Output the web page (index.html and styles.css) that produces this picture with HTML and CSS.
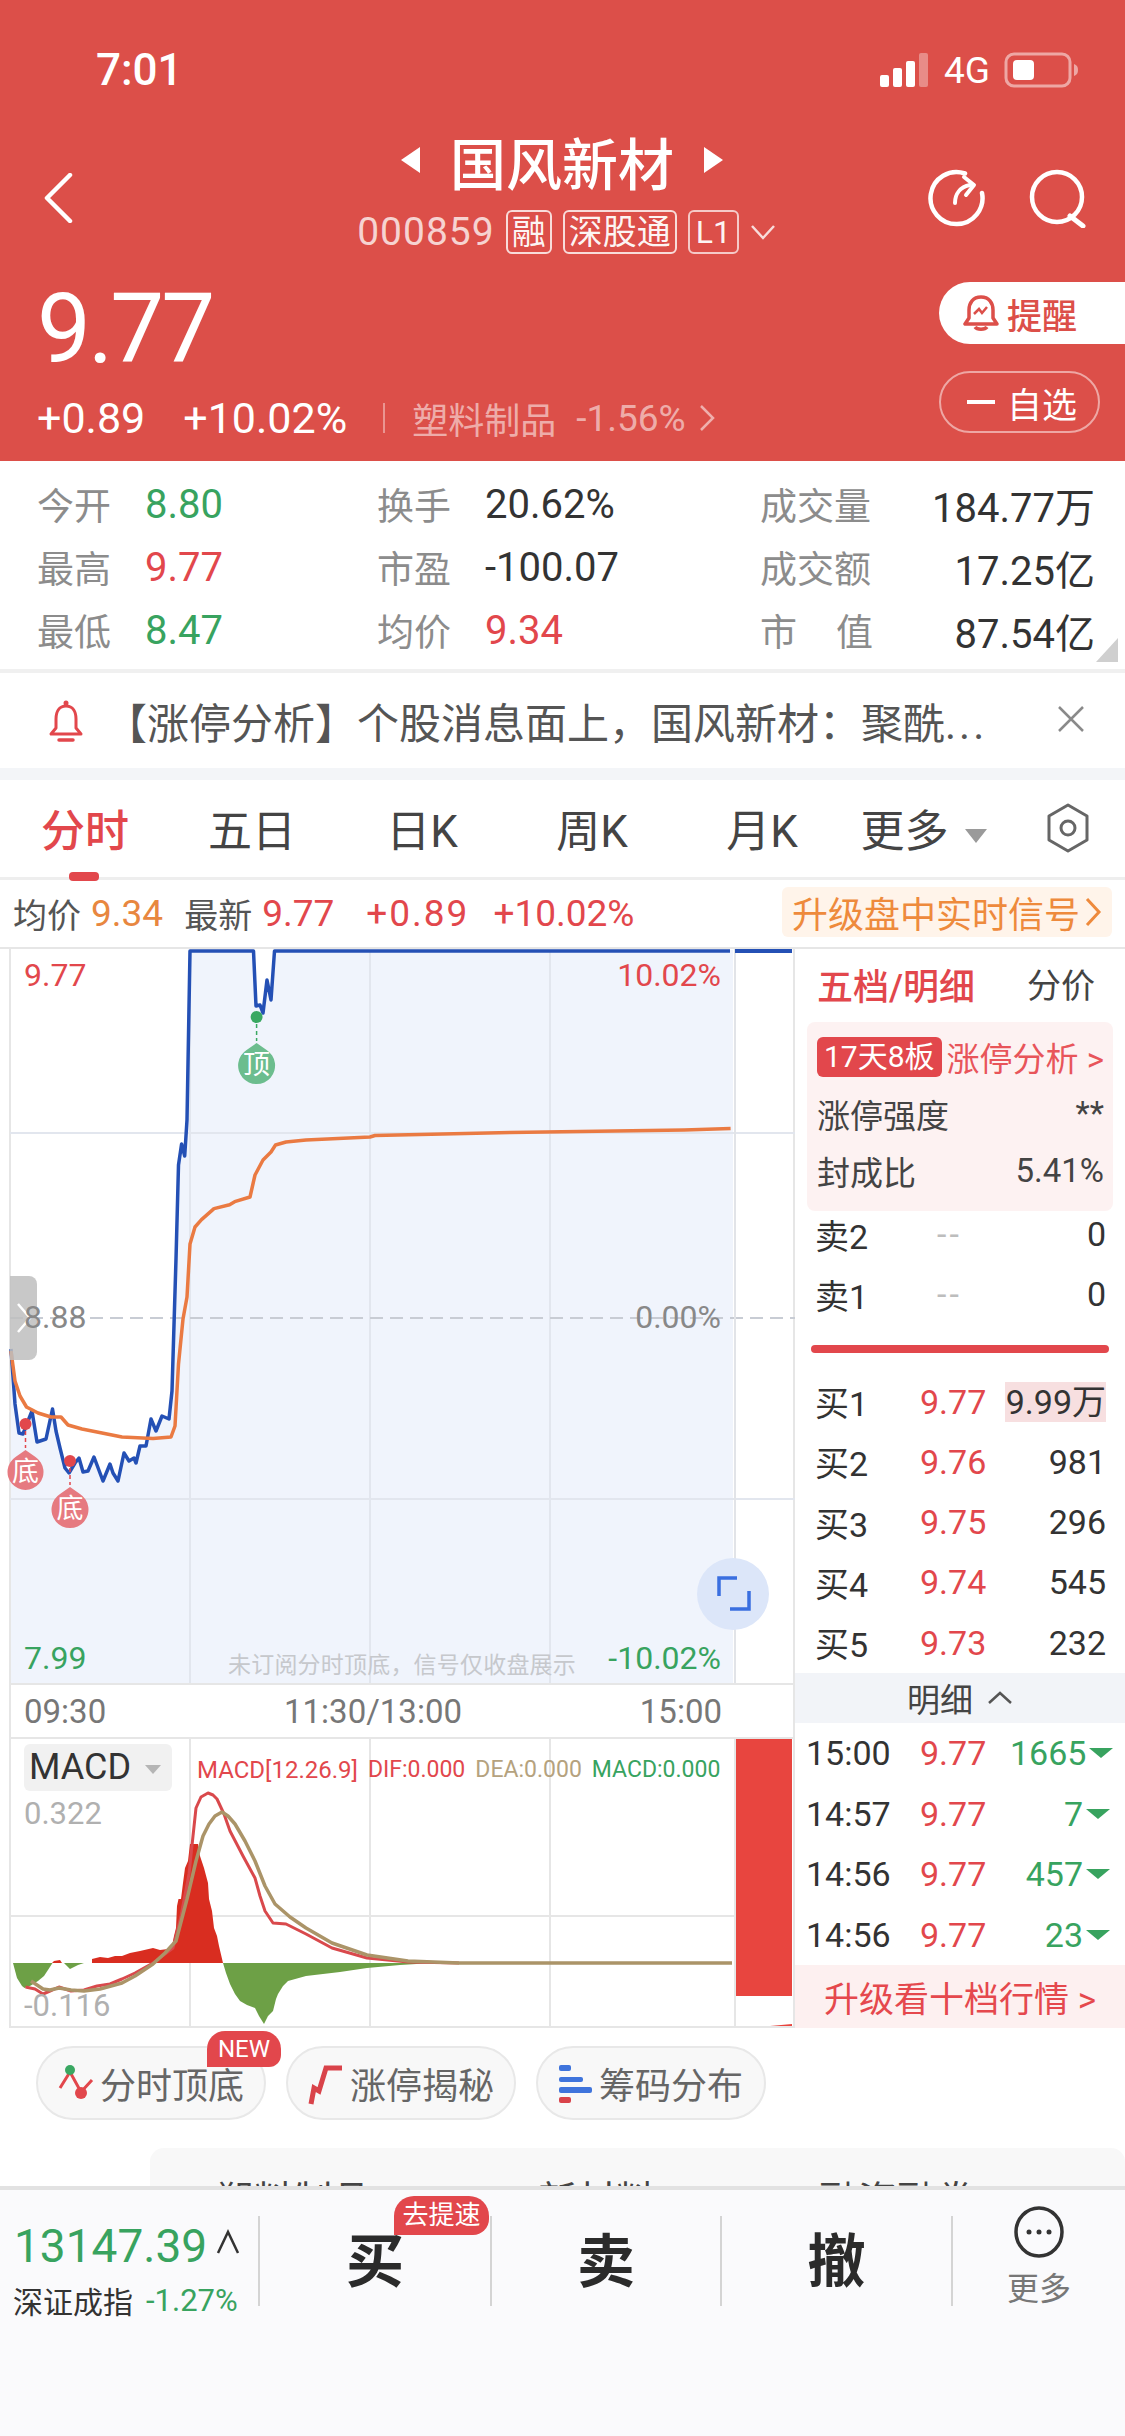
FILE: index.html
```html
<!DOCTYPE html>
<html lang="zh-CN">
<head>
  <meta charset="UTF-8" />
  <title>国风新材 000859</title>
  <link rel="stylesheet" href="styles.css">
</head>
<body>
<div class="page">

  <header class="header">
    <div class="status">
      <span class="clock">7:01</span>
      <div class="status-right">
        <svg width="50" height="36" viewBox="0 0 50 36"><rect x="0" y="23" width="9" height="12" rx="2" fill="#fff"/><rect x="13" y="16" width="9" height="19" rx="2" fill="#fff"/><rect x="26" y="9" width="9" height="26" rx="2" fill="#fff"/><rect x="39" y="1" width="9" height="34" rx="2" fill="#fff" opacity=".35"/></svg>
        <span class="net">4G</span>
        <svg width="76" height="36" viewBox="0 0 76 36"><rect x="2" y="2" width="64" height="32" rx="8" fill="none" stroke="#fff" stroke-opacity=".5" stroke-width="3"/><rect x="9" y="8" width="21" height="20" rx="4" fill="#fff"/><path d="M70 12c3 1 4 3 4 6s-1 5-4 6z" fill="#fff" opacity=".5"/></svg>
      </div>
    </div>

    <div class="nav">
      <svg class="back" width="34" height="50" viewBox="0 0 34 50"><path d="M28 2 5 25l23 23" fill="none" stroke="#fff" stroke-width="4.5" stroke-linecap="round" stroke-linejoin="round"/></svg>
      <div class="nav-center">
        <div class="title-row">
          <span class="tri-left"></span>
          <span class="title">国风新材</span>
          <span class="tri-right"></span>
        </div>
        <div class="code-row">
          <span class="code">000859</span>
          <span class="tag">融</span>
          <span class="tag">深股通</span>
          <span class="tag tag-l1">L1</span>
          <svg width="26" height="16" viewBox="0 0 26 16"><path d="M2 2l11 12L24 2" fill="none" stroke="#fff" stroke-opacity=".8" stroke-width="2.5"/></svg>
        </div>
      </div>
      <div class="nav-icons">
        <svg width="60" height="60" viewBox="0 0 60 60"><path d="M38 5.500A26 26 0 1 0 55 25" fill="none" stroke="#fff" stroke-width="4.500" stroke-linecap="round"/><path d="M28 35c0-9 5-16 15-18" fill="none" stroke="#fff" stroke-width="4" stroke-linecap="round"/><path d="M37 9l10 8-8 10" fill="none" stroke="#fff" stroke-width="4" stroke-linecap="round" stroke-linejoin="round"/></svg>
        <svg width="60" height="60" viewBox="0 0 60 60"><circle cx="29" cy="29" r="25" fill="none" stroke="#fff" stroke-width="4.500"/><path d="M42 48l13 10" fill="none" stroke="#fff" stroke-width="5" stroke-linecap="round"/></svg>
      </div>
    </div>

    <div class="quote">
      <div class="quote-left">
        <div class="price">9.77</div>
        <div class="change">
          <span class="change-a">+0.89</span>
          <span class="change-b">+10.02%</span>
          <span class="sep"></span>
          <span class="sector">塑料制品</span>
          <span class="sector-pct">-1.56%</span>
          <svg width="18" height="30" viewBox="0 0 18 30"><path d="M3 3l12 12L3 27" fill="none" stroke="#fff" stroke-opacity=".55" stroke-width="2.500"/></svg>
        </div>
      </div>
      <div class="quote-right">
        <div class="remind">
          <svg width="36" height="38" viewBox="0 0 36 38"><path d="M18 3c-8 0-12 6-12 13v8l-4 6h32l-4-6v-8c0-7-4-13-12-13z" fill="none" stroke="#dc4f49" stroke-width="3.500" stroke-linejoin="round"/><path d="M12 33c2 3 10 3 12 0" fill="none" stroke="#dc4f49" stroke-width="3.500"/><path d="M11 20l5-5 3 4 5-6" fill="none" stroke="#dc4f49" stroke-width="2.500"/></svg>
          <span>提醒</span>
        </div>
        <div class="watch"><i></i><span>自选</span></div>
      </div>
    </div>
  </header>

  <section class="stats">
    <div class="stat stat-a"><span class="lab">今开</span><span class="val green">8.80</span></div>
    <div class="stat stat-b"><span class="lab">换手</span><span class="val">20.62%</span></div>
    <div class="stat stat-c"><span class="lab">成交量</span><span class="val">184.77万</span></div>
    <div class="stat stat-a"><span class="lab">最高</span><span class="val red">9.77</span></div>
    <div class="stat stat-b"><span class="lab">市盈</span><span class="val">-100.07</span></div>
    <div class="stat stat-c"><span class="lab">成交额</span><span class="val">17.25亿</span></div>
    <div class="stat stat-a"><span class="lab">最低</span><span class="val green">8.47</span></div>
    <div class="stat stat-b"><span class="lab">均价</span><span class="val red">9.34</span></div>
    <div class="stat stat-c"><span class="lab lab-wide">市值</span><span class="val">87.54亿</span></div>
    <span class="corner"></span>
  </section>

  <section class="notice">
    <svg width="38" height="44" viewBox="0 0 38 44"><path d="M19 7c-7 0-10 6-10 13v9l-5 6h30l-5-6v-9c0-7-3-13-10-13z" fill="none" stroke="#e2474c" stroke-width="3" stroke-linejoin="round"/><circle cx="19" cy="4" r="2.500" fill="#e2474c"/><path d="M12 41h14" stroke="#e2474c" stroke-width="3.500" stroke-linecap="round"/></svg>
    <span class="notice-text">【涨停分析】个股消息面上，国风新材：聚酰<span class="dots">...</span></span>
    <svg class="notice-x" width="28" height="28" viewBox="0 0 28 28"><path d="M2 2l24 24M26 2L2 26" stroke="#8a8a8a" stroke-width="2.500"/></svg>
  </section>

  <nav class="tabs">
    <span class="tab active">分时</span>
    <span class="tab">五日</span>
    <span class="tab">日K</span>
    <span class="tab">周K</span>
    <span class="tab">月K</span>
    <span class="tab tab-more">更多<i class="caret"></i></span>
    <svg class="gear" width="44" height="50" viewBox="0 0 44 50"><path d="M22 2l19 11v24L22 48 3 37V13z" fill="none" stroke="#666" stroke-width="3" stroke-linejoin="round"/><circle cx="22" cy="25" r="7" fill="none" stroke="#666" stroke-width="3"/></svg>
  </nav>

  <div class="info">
    <span class="info-lab">均价</span><span class="orange info-num">9.34</span>
    <span class="info-lab info-new">最新</span><span class="red info-num">9.77</span>
    <span class="red info-num info-c1">+0.89</span>
    <span class="red info-num info-c2">+10.02%</span>
    <span class="upgrade">升级盘中实时信号<svg width="18" height="32" viewBox="0 0 18 32"><path d="M3 3l12 13L3 29" fill="none" stroke="#ee8a3c" stroke-width="3"/></svg></span>
  </div>

  <div class="main">
    <div class="charts">
      <div class="plot">
        <svg class="plot-svg" width="795" height="734" viewBox="0 948 795 734">
          <polygon fill="#f0f4fc" points="11,1684 11,1348 15,1403 19,1432 23,1433 28,1420 32,1410 37,1441 46,1438 52.500,1408 56,1430 60,1447 65,1467 69,1472 75,1462 79,1457 83,1471 88,1470 94,1456 103,1480 110,1463 113,1472 118,1480 124,1452 129,1460 134,1457 136,1462 140,1445 146,1445 151,1418 156,1430 162,1415 169,1418 172,1390 176,1258 178.500,1164 181.600,1143 184.700,1155 187,1119 190,949 253.500,949 256,1005 260,1004 263,1012 267,979 271,999 274.500,949 733,949 733,1684"/>
          <g stroke="#e2e6ee" stroke-width="2" fill="none">
            <path d="M190 949V1684M370 949V1684M550 949V1684"/>
            <path d="M10 1132H795M10 1498H795"/>
          </g>
          <path d="M10 1317H795" stroke="#c8ccd4" stroke-width="2" stroke-dasharray="13 7"/>
          <path d="M735 948V1684" stroke="#e2e4e8" stroke-width="2"/>
          <polyline fill="none" stroke="#2450b5" stroke-width="3.500" stroke-linejoin="round" points="11,1348 15,1403 19,1432 23,1433 28,1420 32,1410 37,1441 46,1438 52.500,1408 56,1430 60,1447 65,1467 69,1472 75,1462 79,1457 83,1471 88,1470 94,1456 103,1480 110,1463 113,1472 118,1480 124,1452 129,1460 134,1457 136,1462 140,1445 146,1445 151,1418 156,1430 162,1415 169,1418 172,1390 176,1258 178.500,1164 181.600,1143 184.700,1155 187,1119 190,950 253.500,950 256,1005 260,1004 263,1012 267,979 271,999 274.500,950 730,950"/>
          <path d="M735 950H792" stroke="#2450b5" stroke-width="4"/>
          <polyline fill="none" stroke="#ea7a42" stroke-width="3.500" stroke-linejoin="round" points="11,1350 15,1380 20,1395 26.500,1406 38,1412 51,1416 61,1416 68,1424 82,1428 102,1432 122,1436 153,1437.500 171,1436 175,1425 178.500,1363 183,1318 187,1296 190,1243 195,1226 201.500,1218.600 214,1207.600 229.600,1203.700 234.700,1200.700 250,1196 255,1174 263,1159 271,1151 275.500,1144 286,1141 306,1139 370,1136 375,1134.500 510,1131.500 684,1129 730.600,1127.500"/>

          <g class="mark-red">
            <circle cx="25.500" cy="1423" r="6"/>
            <path d="M25.500 1430V1447" stroke="#e2474c" stroke-width="1.500" stroke-dasharray="4 3"/>
            <path class="soft" d="M25.500 1449l10 7a18 18 0 1 1-20 0z"/>
            <circle cx="70" cy="1460" r="6"/>
            <path d="M70 1467V1484" stroke="#e2474c" stroke-width="1.500" stroke-dasharray="4 3"/>
            <path class="soft" d="M70 1486l10 7a18.500 18.500 0 1 1-20 0z"/>
          </g>
          <text class="mark-text" x="25.500" y="1480">底</text>
          <text class="mark-text" x="70" y="1517">底</text>
          <g class="mark-green">
            <circle cx="256.600" cy="1016" r="6"/>
            <path d="M256.600 1023V1040" stroke="#3aa862" stroke-width="1.500" stroke-dasharray="4 3"/>
            <path class="soft" d="M256.600 1042l10 7a18.500 18.500 0 1 1-20 0z"/>
          </g>
          <text class="mark-text" x="256.600" y="1073">顶</text>

          <circle cx="733" cy="1593" r="36" fill="#dce6f9"/>
          <path d="M719 1595v-18h18M749 1590v18h-19" fill="none" stroke="#3a6fe0" stroke-width="3.500"/>
        </svg>
        <span class="handle"><svg width="16" height="32" viewBox="0 0 16 32"><path d="M2 2l12 14L2 30" fill="none" stroke="#fff" stroke-width="2.500"/></svg></span>
        <span class="pl pl-top red">9.77</span>
        <span class="pr pr-top red">10.02%</span>
        <span class="pl pl-mid">8.88</span>
        <span class="pr pr-mid">0.00%</span>
        <span class="pl pl-low green">7.99</span>
        <span class="pr pr-low green">-10.02%</span>
        <span class="tip">未订阅分时顶底，信号仅收盘展示</span>
      </div>

      <div class="axis"><span>09:30</span><span>11:30/13:00</span><span>15:00</span></div>

      <div class="macd">
        <svg class="macd-svg" width="795" height="290" viewBox="0 1738 795 290">
          <g stroke="#e6e6e6" stroke-width="2" fill="none">
            <path d="M190 1738V2028M370 1738V2028M550 1738V2028M735 1738V2028"/>
            <path d="M10 1915H735"/>
          </g>
          <polygon fill="#d92d20" points="92,1962 92,1958 100,1956 108,1957 115,1955 122,1955 130,1952 140,1950 153,1947 160,1949 168,1948 172,1945 174,1935 176,1927 177,1905 178.500,1898 181,1898 183,1882 185,1867 188,1860 190,1843 198,1843 200,1855 204,1867 208,1882 209,1898 212,1910 214,1927 217,1935 219,1945 223,1962"/>
          <polygon fill="#d92d20" points="52,1962 54,1960 60,1959 62,1962"/>
          <polygon fill="#6da046" points="13,1962 17,1977 22,1985 24.500,1987 30,1985 38,1980 44,1975 46,1972 52.500,1962"/>
          <polygon fill="#6da046" points="64,1962 70,1968 78,1964 84,1962"/>
          <polygon fill="#6da046" points="223,1962 226,1972 230,1983 235,1993 240,2000 247,2004 255,2007 259,2015 264,2023 268,2015 273,2010 276,1998 278,1993 283,1985 288,1980 306,1975 340,1971 367,1967 400,1964 433,1962"/>
          <polyline fill="none" stroke="#d9494c" stroke-width="3" stroke-linejoin="round" points="25.500,1986 35,1988 43,1993 50,1990 59,1986 71,1990 84,1989 97,1985 110,1983 122,1978 135,1972 153,1962 165,1953 173,1947 181,1915 189,1873 193,1835 196,1807 201,1796 208,1792 213,1794 217,1798 224,1813 230,1830 243,1855 255,1877 260,1895 265,1910 273,1922 286,1923 296,1928 306,1933 332,1947 367,1957 408,1961 459,1962"/>
          <polyline fill="none" stroke="#ab9468" stroke-width="3.500" stroke-linejoin="round" points="31,1980 43,1988 50,1989 59,1987 71,1989 84,1990 100,1988 122,1982 135,1975 153,1963 165,1952 176,1940 187,1898 196,1860 203,1835 209,1823 215,1815 222,1811 228,1815 235,1823 245,1840 255,1860 265,1885 275,1903 290,1916 306,1927 332,1942 367,1954 408,1960 459,1962 732,1962"/>
          <rect x="736" y="1738" width="56" height="257" fill="#e8453f"/>
          <polygon points="737,2028 792,2023 792,2028" fill="#e8453f"/>
        </svg>
        <span class="macd-chip">MACD<i></i></span>
        <span class="macd-legend"><em class="red">MACD[12.26.9]</em><em class="red">DIF:0.000</em><em class="tan">DEA:0.000</em><em class="green">MACD:0.000</em></span>
        <span class="macd-hi">0.322</span>
        <span class="macd-lo">-0.116</span>
      </div>
    </div>

    <aside class="panel">
      <div class="panel-head"><span class="panel-title">五档/明细</span><span class="panel-side">分价</span></div>
      <div class="limit">
        <div class="limit-row"><span class="limit-tag">17天8板</span><span class="limit-link">涨停分析 &gt;</span></div>
        <div class="limit-row"><span>涨停强度</span><span>**</span></div>
        <div class="limit-row"><span>封成比</span><span>5.41%</span></div>
      </div>
      <div class="book-row book-first"><span>卖2</span><span class="dash">--</span><span class="qty">0</span></div>
      <div class="book-row"><span>卖1</span><span class="dash">--</span><span class="qty">0</span></div>
      <div class="book-bar"></div>
      <div class="book-row"><span>买1</span><span class="red">9.77</span><span class="qty qty-hl">9.99万</span></div>
      <div class="book-row"><span>买2</span><span class="red">9.76</span><span class="qty">981</span></div>
      <div class="book-row"><span>买3</span><span class="red">9.75</span><span class="qty">296</span></div>
      <div class="book-row"><span>买4</span><span class="red">9.74</span><span class="qty">545</span></div>
      <div class="book-row"><span>买5</span><span class="red">9.73</span><span class="qty">232</span></div>
      <div class="detail-head">明细<svg width="26" height="14" viewBox="0 0 26 14"><path d="M2 12L13 2l11 10" fill="none" stroke="#555" stroke-width="2.500"/></svg></div>
      <div class="tick"><span>15:00</span><span class="red">9.77</span><span class="green vol">1665<i></i></span></div>
      <div class="tick"><span>14:57</span><span class="red">9.77</span><span class="green vol">7<i></i></span></div>
      <div class="tick"><span>14:56</span><span class="red">9.77</span><span class="green vol">457<i></i></span></div>
      <div class="tick"><span>14:56</span><span class="red">9.77</span><span class="green vol">23<i></i></span></div>
      <div class="more-link">升级看十档行情 &gt;</div>
    </aside>
  </div>

  <div class="pills">
    <span class="pill">
      <svg width="36" height="38" viewBox="0 0 36 38"><path d="M2 24L12 8l11 20L34 16" fill="none" stroke="#e2474c" stroke-width="3"/><circle cx="12" cy="6" r="5" fill="#3aa862"/><circle cx="23" cy="29" r="6" fill="#e2474c"/></svg>
      分时顶底
      <b class="new">NEW</b>
    </span>
    <span class="pill">
      <svg width="36" height="46" viewBox="0 0 36 46"><path d="M3 44l3-16 5 3 7-23h16" fill="none" stroke="#d9434a" stroke-width="5"/></svg>
      涨停揭秘
    </span>
    <span class="pill">
      <svg width="34" height="40" viewBox="0 0 34 40"><rect x="0" y="2" width="12" height="6" rx="2" fill="#3f74dc"/><rect x="0" y="14" width="24" height="5" rx="2" fill="#3f74dc"/><rect x="0" y="24" width="33" height="6" rx="2" fill="#3f74dc"/><rect x="0" y="34" width="12" height="6" rx="2" fill="#d9434a"/></svg>
      筹码分布
    </span>
  </div>

  <div class="peek">
    <span>塑料制品</span><span>新材料</span><span>融资融券</span>
  </div>

  <footer class="footer">
    <div class="index">
      <div class="index-top"><span class="index-num">13147.39</span><svg width="24" height="26" viewBox="0 0 24 26"><path d="M2 24L12 3l10 21" fill="none" stroke="#333" stroke-width="2.500"/></svg></div>
      <div class="index-sub"><span>深证成指</span><span class="green index-pct">-1.27%</span></div>
    </div>
    <div class="act act-buy">买<b class="speed">去提速</b></div>
    <div class="act">卖</div>
    <div class="act">撤</div>
    <div class="act-more">
      <svg width="50" height="52" viewBox="0 0 50 52"><ellipse cx="25" cy="26" rx="23" ry="24" fill="none" stroke="#333" stroke-width="3.500"/><circle cx="15" cy="26" r="2.500" fill="#333"/><circle cx="25" cy="26" r="2.500" fill="#333"/><circle cx="35" cy="26" r="2.500" fill="#333"/></svg>
      <span>更多</span>
    </div>
  </footer>

</div>
</body>
</html>
```

FILE: styles.css
```css
* {
  box-sizing: border-box;
}
html, body {
  margin: 0;
  padding: 0;
}
body {
  font-family: Roboto, "Noto Sans CJK SC", sans-serif;
  color: #333;
  background: #fff;
}
.page {
  width: 1125px;
  height: 2436px;
  overflow: hidden;
  display: flex;
  flex-direction: column;
}
.red { color: #e2474c; }
.green { color: #38a35f; }
.orange { color: #e8873f; }
.tan { color: #b5a27e; }

/* header */
.header {
  height: 461px;
  background: #dc4f49;
  color: #fff;
  flex: none;
}
.status {
  height: 120px;
  padding: 40px 45px 0 96px;
  display: flex;
  justify-content: space-between;
  align-items: flex-start;
}
.clock {
  font-size: 44px;
  line-height: 60px;
  font-weight: 500;
}
.status-right {
  display: flex;
  align-items: center;
  height: 60px;
  gap: 14px;
}
.net {
  font-size: 37px;
}
.nav {
  height: 150px;
  display: grid;
  grid-template-columns: 357px 410px 1fr;
  position: relative;
}
.back {
  margin: 53px 0 0 42px;
}
.nav-center {
  display: flex;
  flex-direction: column;
  align-items: center;
}
.title-row {
  height: 80px;
  display: flex;
  align-items: center;
  gap: 30px;
}
.title {
  font-size: 56px;
  font-weight: 500;
}
.tri-left, .tri-right {
  width: 0;
  height: 0;
  border-top: 13px solid transparent;
  border-bottom: 13px solid transparent;
}
.tri-left { border-right: 19px solid #fff; }
.tri-right { border-left: 19px solid #fff; }
.code-row {
  height: 64px;
  display: flex;
  align-items: center;
  gap: 11px;
  margin-left: 9px;
  white-space: nowrap;
}
.code {
  font-size: 39px;
  color: rgba(255, 255, 255, 0.75);
  letter-spacing: 1px;
}
.tag {
  border: 2px solid rgba(255, 255, 255, 0.8);
  border-radius: 6px;
  height: 44px;
  line-height: 40px;
  padding: 0 4px;
  font-size: 34px;
  color: rgba(255, 255, 255, 0.95);
}
.tag-l1 {
  font-size: 32px;
  padding: 0 6px;
  border-color: rgba(255, 255, 255, 0.7);
}
.nav-icons {
  display: flex;
  gap: 41px;
  margin: 48px 0 0 160px;
}
.quote {
  height: 191px;
  display: flex;
  justify-content: space-between;
}
.quote-left {
  padding-left: 37px;
}
.price {
  font-size: 96px;
  line-height: 112px;
  margin-top: 3px;
  letter-spacing: -3px;
}
.change {
  display: flex;
  align-items: center;
  height: 62px;
  margin-top: 2px;
  font-size: 43px;
  white-space: nowrap;
}
.change-b { margin-left: 38px; }
.sep {
  width: 2px;
  height: 30px;
  background: rgba(255, 255, 255, 0.4);
  margin: 0 27px 0 36px;
}
.sector {
  font-size: 36px;
  color: rgba(255, 255, 255, 0.55);
}
.sector-pct {
  font-size: 37px;
  color: rgba(255, 255, 255, 0.55);
  margin: 0 12px 0 20px;
}
.quote-right {
  width: 186px;
  padding-top: 12px;
  display: flex;
  flex-direction: column;
  gap: 27px;
}
.remind {
  height: 62px;
  background: #fff;
  border-radius: 31px 0 0 31px;
  color: #dc4f49;
  font-size: 35px;
  font-weight: 500;
  display: flex;
  align-items: center;
  gap: 8px;
  padding-left: 24px;
}
.watch {
  height: 62px;
  width: 161px;
  border: 2px solid rgba(255, 255, 255, 0.5);
  border-radius: 31px;
  font-size: 35px;
  display: flex;
  align-items: center;
  gap: 12px;
  padding-left: 26px;
}
.watch i {
  width: 28px;
  height: 4px;
  background: #fff;
}

/* stats */
.stats {
  height: 212px;
  flex: none;
  padding-top: 11px;
  display: grid;
  grid-template-columns: 340px 383px 1fr;
  grid-auto-rows: 63px;
  padding-left: 37px;
  padding-right: 30px;
  position: relative;
  border-bottom: 4px solid #f0f0f0;
}
.stat {
  display: flex;
  align-items: center;
  font-size: 40px;
  white-space: nowrap;
}
.lab {
  color: #8c8c8c;
  font-size: 37px;
  width: 108px;
}
.val {
  padding-top: 2px;
}
.stat-c {
  justify-content: space-between;
}
.stat-c .lab {
  width: 113px;
}
.lab-wide {
  text-align: justify;
  text-align-last: justify;
}
.corner {
  position: absolute;
  right: 7px;
  bottom: 7px;
  width: 0;
  height: 0;
  border-left: 22px solid transparent;
  border-bottom: 24px solid #cfcfcf;
}

/* notice */
.notice {
  height: 107px;
  flex: none;
  display: flex;
  align-items: center;
  padding-left: 47px;
  position: relative;
  border-bottom: 12px solid #f3f5f8;
}
.notice-text {
  font-size: 42px;
  color: #555;
  margin-left: 20px;
  white-space: nowrap;
}
.dots {
  letter-spacing: 3px;
}
.notice-x {
  position: absolute;
  left: 1057px;
  top: 32px;
}

/* tabs */
.tabs {
  height: 100px;
  flex: none;
  display: grid;
  grid-template-columns: repeat(6, 170px) 1fr;
  align-items: center;
  border-bottom: 3px solid #eee;
  position: relative;
  padding-bottom: 2px;
}
.tab {
  font-size: 44px;
  color: #444;
  text-align: center;
  position: relative;
  margin-left: -6px;
}
.tab.active {
  color: #e2474c;
  font-weight: 500;
  margin-left: 0;
}
.tab-more {
  margin-left: -23px;
}
.tab.active::after {
  content: "";
  position: absolute;
  left: 69px;
  width: 30px;
  height: 9px;
  bottom: -21px;
  border-radius: 4px;
  background: #e2474c;
}
.caret {
  display: inline-block;
  width: 0;
  height: 0;
  margin-left: 16px;
  vertical-align: 4px;
  border-left: 11px solid transparent;
  border-right: 11px solid transparent;
  border-top: 14px solid #9a9a9a;
}
.gear {
  margin-left: 26px;
}

/* info row */
.info {
  height: 67px;
  flex: none;
  display: flex;
  align-items: center;
  padding-left: 13px;
  white-space: nowrap;
  position: relative;
}
.info-lab {
  font-size: 34px;
  color: #555;
}
.info-num {
  margin-left: 10px;
  font-size: 37px;
}
.info-new { margin-left: 21px; }
.info-c1 { margin-left: 32px; letter-spacing: 2px; }
.info-c2 { margin-left: 24px; }
.upgrade {
  position: absolute;
  left: 782px;
  top: 7px;
  width: 330px;
  height: 50px;
  background: #fff4ea;
  border-radius: 6px;
  color: #ee8a3c;
  font-size: 36px;
  display: flex;
  align-items: center;
  gap: 4px;
  padding-left: 10px;
}

/* charts */
.main {
  height: 1081px;
  flex: none;
  display: flex;
  border-top: 2px solid #e6e6e6;
}
.charts {
  width: 786px;
  flex: none;
  display: flex;
  flex-direction: column;
  margin-left: 9px;
  border-left: 2px solid #e6e6e6;
  border-right: 2px solid #e6e6e6;
  border-bottom: 2px solid #e6e6e6;
}
.plot {
  height: 734px;
  margin-left: -11px;
  position: relative;
  flex: none;
}
.plot-svg, .macd-svg {
  display: block;
}
.mark-red circle { fill: #e2474c; }
.mark-red .soft { fill: #e67a80; }
.mark-green circle { fill: #3aa862; }
.mark-green .soft { fill: #6cbd8e; }
.mark-text {
  fill: #fff;
  font-size: 27px;
  text-anchor: middle;
}
.handle {
  position: absolute;
  left: 10px;
  top: 327px;
  width: 27px;
  height: 84px;
  background: rgba(190, 190, 190, 0.85);
  border-radius: 0 8px 8px 0;
  display: flex;
  align-items: center;
  padding-left: 6px;
}
.pl, .pr {
  position: absolute;
  font-size: 32px;
  line-height: 36px;
  color: #888;
}
.pl { left: 24px; }
.pr { right: 72px; }
.pl-top, .pr-top { top: 8px; color: #e2474c; }
.pl-mid, .pr-mid { top: 350px; }
.pl-low, .pr-low { top: 691px; color: #38a35f; }
.tip {
  position: absolute;
  left: 228px;
  top: 700px;
  font-size: 23px;
  letter-spacing: 0.2px;
  line-height: 34px;
  color: #c6c8cc;
  white-space: nowrap;
}
.axis {
  height: 56px;
  flex: none;
  border-top: 2px solid #e6e6e6;
  border-bottom: 2px solid #e6e6e6;
  padding: 0 71px 0 13px;
  display: flex;
  justify-content: space-between;
  align-items: center;
  font-size: 33px;
  color: #777;
}
.macd {
  height: 288px;
  margin-left: -11px;
  position: relative;
  overflow: hidden;
}
.macd-chip {
  position: absolute;
  left: 24px;
  top: 5px;
  width: 148px;
  height: 47px;
  background: #f1f1f1;
  border-radius: 6px;
  font-size: 36px;
  line-height: 47px;
  padding-left: 5px;
  color: #333;
}
.macd-chip i {
  position: absolute;
  right: 11px;
  top: 21px;
  width: 0;
  height: 0;
  border-left: 8px solid transparent;
  border-right: 8px solid transparent;
  border-top: 9px solid #b5b5b5;
}
.macd-legend {
  position: absolute;
  left: 197px;
  top: 16px;
  display: flex;
  gap: 10px;
  font-size: 23px;
  line-height: 30px;
  white-space: nowrap;
}
.macd-legend em {
  font-style: normal;
}
.macd-legend em:first-child {
  font-size: 24px;
}
.macd-hi, .macd-lo {
  position: absolute;
  left: 24px;
  font-size: 31px;
  line-height: 36px;
  color: #b0b0b0;
}
.macd-hi { top: 57px; }
.macd-lo { top: 249px; }

/* right panel */
.panel {
  width: 330px;
  flex: none;
  display: flex;
  flex-direction: column;
  font-size: 34px;
}
.panel-head {
  height: 73px;
  flex: none;
  display: flex;
  align-items: center;
  justify-content: space-between;
  padding: 0 30px 4px 22px;
}
.panel-title {
  color: #e2474c;
  font-size: 36px;
  font-weight: 500;
  white-space: nowrap;
}
.panel-side {
  font-size: 34px;
  color: #444;
}
.limit {
  height: 189px;
  flex: none;
  margin: 0 12px;
  padding: 6px 9px 12px 10px;
  background: #fdf2f2;
  border-radius: 8px;
  display: flex;
  flex-direction: column;
}
.limit-row {
  flex: 1;
  display: flex;
  align-items: center;
  justify-content: space-between;
  font-size: 33px;
  color: #444;
  white-space: nowrap;
}
.limit-tag {
  background: #e2474c;
  color: #fff;
  font-size: 30px;
  line-height: 40px;
  border-radius: 6px;
  padding: 0 7px;
}
.limit-link {
  color: #e8555a;
}
.book-row {
  height: 60.250px;
  flex: none;
  display: grid;
  grid-template-columns: 105px 91px 1fr;
  align-items: center;
  padding-left: 20px;
  padding-right: 19px;
  white-space: nowrap;
}
.book-first {
  margin-top: -7px;
}
.dash {
  color: #bdbdbd;
  padding-left: 17px;
  letter-spacing: 3px;
}
.qty {
  text-align: right;
}
.qty-hl {
  background: #f7dfe0;
  line-height: 40px;
  margin-left: -6px;
}
.book-bar {
  height: 47px;
  flex: none;
  position: relative;
}
.book-bar::after {
  content: "";
  position: absolute;
  left: 16px;
  right: 16px;
  top: 20px;
  height: 8px;
  border-radius: 4px;
  background: #e2474c;
}
.detail-head {
  height: 50px;
  flex: none;
  background: #f2f4f8;
  display: flex;
  align-items: center;
  justify-content: center;
  gap: 14px;
  font-size: 33px;
  color: #444;
}
.tick {
  height: 60.500px;
  flex: none;
  display: grid;
  grid-template-columns: 114px 90px 1fr;
  align-items: center;
  padding: 0 15px 0 11px;
  white-space: nowrap;
}
.vol {
  display: flex;
  justify-content: flex-end;
  align-items: center;
  gap: 3px;
}
.vol i {
  width: 0;
  height: 0;
  border-left: 12px solid transparent;
  border-right: 12px solid transparent;
  border-top: 10px solid #38a35f;
}
.more-link {
  flex: 1;
  background: #fdf0f0;
  color: #e5484d;
  font-size: 35px;
  display: flex;
  align-items: center;
  justify-content: center;
  white-space: nowrap;
}

/* pills */
.pills {
  height: 120px;
  flex: none;
  display: flex;
  gap: 20px;
  padding: 18px 0 0 36px;
}
.pill {
  width: 230px;
  height: 74px;
  background: #f8f8f8;
  border: 2px solid #e8e8e8;
  border-radius: 37px;
  display: flex;
  align-items: center;
  justify-content: center;
  gap: 6px;
  font-size: 36px;
  color: #666;
  position: relative;
  white-space: nowrap;
}
.new {
  position: absolute;
  right: -17px;
  top: -17px;
  width: 74px;
  height: 36px;
  background: #e2474c;
  color: #fff;
  font-size: 24px;
  font-weight: 400;
  line-height: 36px;
  text-align: center;
  border-radius: 18px 18px 12px 0;
}
.peek {
  height: 38px;
  flex: none;
  margin-left: 150px;
  background: #f8f8f8;
  border-radius: 14px 14px 0 0;
  overflow: hidden;
  padding-top: 28px;
  display: flex;
  font-size: 39px;
  line-height: 50px;
  color: #444;
}
.peek span:nth-child(1) { margin-left: 65px; }
.peek span:nth-child(2) { margin-left: 167px; }
.peek span:nth-child(3) { margin-left: 164px; }

/* footer */
.footer {
  flex: 1;
  background: #fafafc;
  border-top: 4px solid #e2e2e2;
  display: grid;
  grid-template-columns: 258px 232px 230px 231px 1fr;
  grid-template-rows: 94px;
  padding-top: 26px;
  align-items: start;
}
.index {
  padding-left: 14px;
  height: 90px;
}
.index-top {
  display: flex;
  align-items: flex-start;
  gap: 9px;
  margin-top: -1px;
}
.index-num {
  font-size: 46px;
  line-height: 62px;
  color: #38a35f;
}
.index-top svg {
  margin-top: 14px;
}
.index-sub {
  display: flex;
  align-items: center;
  gap: 13px;
  font-size: 30px;
  margin-top: 1px;
  margin-left: -1px;
  white-space: nowrap;
}
.index-pct {
  font-size: 31px;
}
.act {
  border-left: 2px solid #d4d4d4;
  height: 90px;
  font-size: 58px;
  font-weight: 700;
  text-align: center;
  line-height: 92px;
  color: #2b2b2b;
  position: relative;
}
.speed {
  position: absolute;
  left: 134px;
  top: -20px;
  width: 95px;
  height: 39px;
  background: #e2474c;
  border-radius: 20px 20px 16px 0;
  color: #fff;
  font-size: 26px;
  font-weight: 400;
  line-height: 39px;
}
.act-more {
  border-left: 2px solid #d4d4d4;
  height: 90px;
  display: flex;
  flex-direction: column;
  align-items: center;
  gap: 9px;
  font-size: 32px;
  color: #777;
}
.act-more svg {
  margin-top: -10px;
  flex: none;
}
.act-more span {
  line-height: 44px;
}
```
